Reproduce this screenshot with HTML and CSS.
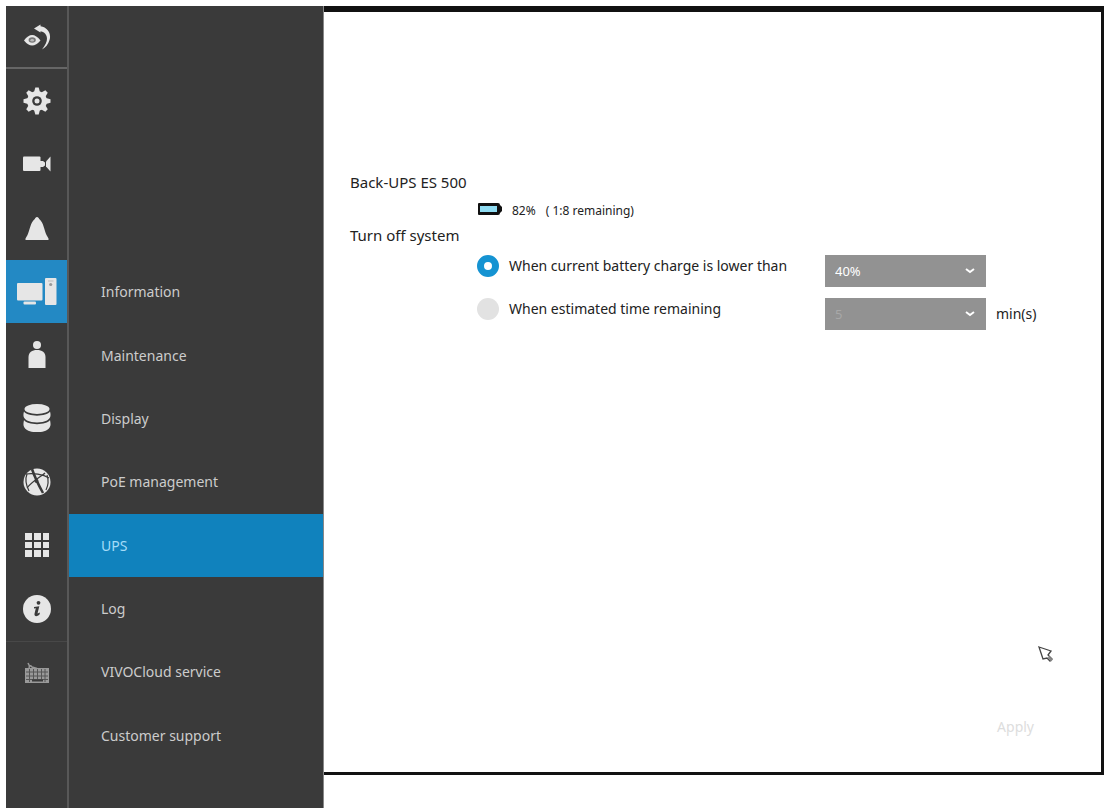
FILE: index.html
```html
<!DOCTYPE html>
<html lang="en">
<head>
  <meta charset="UTF-8">
  <meta name="viewport" content="width=device-width, initial-scale=1">
  <title>UPS settings</title>
  <link rel="stylesheet" href="styles.css">
</head>
<body>
  <div class="app">
    <nav class="rail" aria-label="Main">
      <a href="#" class="rail-back" aria-label="Back to live view">
        <svg class="icon" viewBox="0 0 28 28">
          <path d="M1 17.500Q9 6.500 17.500 17.500Q9 27.500 1 17.500Z"/>
          <ellipse cx="9.200" cy="17" rx="3.600" ry="2.800" fill="#777"/>
          <ellipse cx="9.200" cy="17.300" rx="1.800" ry="1.300" fill="#bbb"/>
          <path d="M11 5.500L17.500 1.500V3.300C25 4.500 28.500 11 26.500 17C25.300 21.500 22.500 24.500 19 26.500C24 20 24.800 16 23.300 12.500C22.200 9.800 20 8.500 17.500 8.200V9.500Z"/>
        </svg>
      </a>
      <a href="#" aria-label="Settings">
        <svg class="icon" viewBox="0 0 28 28">
          <g>
            <circle cx="14" cy="14" r="10"/>
            <path id="tooth" d="M10.800 6L12.300 .5H15.700L17.200 6Z"/>
            <use href="#tooth" transform="rotate(45 14 14)"/>
            <use href="#tooth" transform="rotate(90 14 14)"/>
            <use href="#tooth" transform="rotate(135 14 14)"/>
            <use href="#tooth" transform="rotate(180 14 14)"/>
            <use href="#tooth" transform="rotate(225 14 14)"/>
            <use href="#tooth" transform="rotate(270 14 14)"/>
            <use href="#tooth" transform="rotate(315 14 14)"/>
          </g>
          <circle cx="14" cy="14" r="4.800" class="cut"/>
          <circle cx="14" cy="14" r="2.500"/>
        </svg>
      </a>
      <a href="#" aria-label="Cameras">
        <svg class="icon" viewBox="0 0 28 28">
          <rect x="0" y="6.500" width="17.500" height="14.500" rx="1"/>
          <path d="M17 11H20L22 12.500V15.500L20 17H17Z"/>
          <path d="M27.500 6.500V21.500L23 16.500V11.500Z"/>
        </svg>
      </a>
      <a href="#" aria-label="Alarms">
        <svg class="icon" viewBox="0 0 28 28">
          <path d="M14 3C15.200 3 15.800 4 16.200 5C20.500 8 21.500 17 23.500 21L25.500 24.500V26H2.500V24.500L4.500 21C6.500 17 7.500 8 11.800 5C12.200 4 12.800 3 14 3Z"/>
        </svg>
      </a>
      <a href="#" class="active" aria-label="System">
        <svg class="icon icon-wide" viewBox="0 0 40 28">
          <rect x="0" y="6" width="25.500" height="17.500" rx="1"/>
          <rect x="6.500" y="24.500" width="12.500" height="3" rx="1"/>
          <rect x="28" y="1" width="11.500" height="27" rx="1"/>
          <path d="M31 4H36.500" stroke="#bbb" stroke-width="1"/>
          <circle cx="33.700" cy="7.500" r="1.600" fill="#999"/>
        </svg>
      </a>
      <a href="#" aria-label="Users">
        <svg class="icon" viewBox="0 0 28 28">
          <circle cx="14" cy="4" r="4"/>
          <path d="M5.500 27V16C5.500 11.500 9 9 14 9S22.500 11.500 22.500 16V27Z"/>
        </svg>
      </a>
      <a href="#" aria-label="Storage">
        <svg class="icon" viewBox="0 0 28 28">
          <ellipse cx="14" cy="5" rx="12.500" ry="5"/>
          <path d="M1 7.500C4 13 24 13 27 7.500C28 11 28 14 24 16.500C19 19 9 19 4 16.500C0 14 0 11 1 7.500Z"/>
          <path d="M1 16C4 21.500 24 21.500 27 16C28 21 28 23 24 26C19 29 9 29 4 26C0 23 0 21 1 16Z"/>
        </svg>
      </a>
      <a href="#" aria-label="Network">
        <svg class="icon" viewBox="0 0 28 28">
          <circle cx="14" cy="14" r="13.500"/>
          <g fill="none" stroke="#3a3a3a" stroke-width="1.200">
            <path d="M9 1C11 7 15 16 20 25" stroke-width="2.500"/>
            <path d="M3 6C10 5 20 6 26 10"/>
            <path d="M22 5C19 8 9 13 4 20"/>
            <path d="M24 7C26 13 25 18 23 22"/>
            <path d="M4 6C2 11 3 17 6 23"/>
          </g>
          <circle cx="13.500" cy="13" r="2" class="cut"/>
        </svg>
      </a>
      <a href="#" aria-label="Applications">
        <svg class="icon" viewBox="0 0 28 28">
          <path d="M2 2h7v7H2zM11 2h7v7H11zM20 2h6v7H20zM2 11h7v6H2zM11 11h7v6H11zM20 11h6v6H20zM2 19h7v7H2zM11 19h7v7H11zM20 19h6v7H20z"/>
        </svg>
      </a>
      <a href="#" aria-label="About">
        <svg class="icon" viewBox="0 0 28 28">
          <circle cx="14" cy="14" r="14"/>
          <circle cx="15.500" cy="7.800" r="1.900" class="cut"/>
          <path class="cut" d="M11 12L16.300 11.200L14.500 18.500L17 17.500L16.500 19.500C14 22 11 21.500 11.500 18.800L12.800 13.200L11 13.500Z"/>
        </svg>
      </a>
      <a href="#" class="rail-keyboard" aria-label="Keyboard">
        <svg class="icon" viewBox="0 0 28 28">
          <path d="M6 10C6 6 8 6 9 8L14 9.500" fill="none" stroke="#999" stroke-width="1.500"/>
          <path d="M5 4L7 8" stroke="#999" stroke-width="1.500"/>
          <rect x="2" y="9" width="24" height="15" fill="#999"/>
          <path d="M3 13H25M3 17H25M3 20.500H25M6.500 10V23M10.500 10V20M14.500 10V20M18.500 10V20M22 10V23" stroke="#555" stroke-width="1"/>
          <rect x="9" y="20.500" width="11" height="2" class="cut"/>
        </svg>
      </a>
    </nav>

    <nav class="submenu" aria-label="System">
      <a href="#">Information</a>
      <a href="#">Maintenance</a>
      <a href="#">Display</a>
      <a href="#">PoE management</a>
      <a href="#" class="active">UPS</a>
      <a href="#">Log</a>
      <a href="#">VIVOCloud service</a>
      <a href="#">Customer support</a>
    </nav>

    <main class="panel">
      <form class="ups">
        <h1>Back-UPS ES 500</h1>
        <div class="battery">
          <svg class="battery-icon" viewBox="0 0 24 12">
            <path d="M1 0H20Q22 0 22 2L24 4V8L22 10Q22 12 20 12H1Q0 12 0 11V1Q0 0 1 0Z" fill="#111"/>
            <rect x="2" y="3" width="17" height="6" fill="#8fdcf2"/>
          </svg>
          <span>82%</span>
          <span>( 1:8 remaining)</span>
        </div>
        <h2>Turn off system</h2>
        <div class="options">
          <input type="radio" name="mode" id="by-charge" checked>
          <label for="by-charge">When current battery charge is lower than</label>
          <div class="field">
            <div class="select">
              <select aria-label="Battery charge"><option>40%</option><option>30%</option><option>20%</option></select>
              <svg viewBox="0 0 12 8"><path d="M2 2L6 5L10 2"/></svg>
            </div>
          </div>
          <input type="radio" name="mode" id="by-time">
          <label for="by-time">When estimated time remaining</label>
          <div class="field">
            <div class="select">
              <select id="minutes" disabled><option>5</option><option>10</option></select>
              <svg viewBox="0 0 12 8"><path d="M2 2L6 5L10 2"/></svg>
            </div>
            <label for="minutes">min(s)</label>
          </div>
        </div>
        <button type="submit" class="apply" disabled>Apply</button>
      </form>
      <svg class="pointer" viewBox="0 0 18 18">
        <path d="M2 1L14 5L11 9L15 13L13 15L10 12L6 13Z" fill="#fff" stroke="#444" stroke-width="1.300"/>
        <path d="M11.500 11L15 14.500" stroke="#888" stroke-width="2.500"/>
      </svg>
    </main>
  </div>
</body>
</html>
```

FILE: styles.css
```css
:root {
  --dark: #3a3a3a;
  --line: #666;
  --blue: #1082bd;
  --text: #222;
  --icon: #e6e6e6;
}
* { box-sizing: border-box; margin: 0; padding: 0; }
body {
  font-family: 'Noto Sans', 'Open Sans', sans-serif;
  font-size: 14px;
  color: var(--text);
  background: #fff;
}
a { text-decoration: none; }
.app {
  display: flex;
  min-height: 100vh;
  padding: 6px 6px 4px;
}

/* icon rail */
.rail {
  display: grid;
  grid-template-rows: 63px repeat(10, minmax(48px, 1fr));
  flex: 0 0 63px;
  padding-bottom: 104px;
  background: var(--dark);
  border-right: 2px solid #585858;
}
.rail a {
  display: flex;
  align-items: center;
  justify-content: center;
}
.rail .rail-back { border-bottom: 2px solid var(--line); }
.rail .rail-keyboard { border-top: 1px solid #484848; }
.rail .active { background: #2389c4; }
.icon {
  width: 28px;
  height: 28px;
  fill: var(--icon);
}
.icon-wide { width: 40px; }
.cut { fill: var(--dark); }

/* second level menu */
.submenu {
  display: grid;
  grid-auto-rows: minmax(48px, 1fr);
  flex: 0 0 255px;
  padding: 254px 0 41px;
  background: var(--dark);
  border-right: 1px solid #888;
}
.submenu a {
  display: flex;
  align-items: center;
  padding-left: 32px;
  color: #ccc;
}
.submenu .active {
  background: var(--blue);
  color: #a5dcf8;
}

/* content */
.panel {
  position: relative;
  flex: 1;
  display: flex;
  margin-bottom: 33px;
  border: solid #111;
  border-width: 6px 3px 3px 0;
}
.ups {
  flex: 1;
  display: flex;
  flex-direction: column;
  padding: 160px 59px 32px 26px;
}
h1, h2 {
  font-size: 15px;
  font-weight: 400;
  line-height: 20px;
}
.battery {
  display: flex;
  align-items: center;
  gap: 10px;
  height: 33px;
  padding-left: 128px;
  font-size: 12px;
}
.battery span { padding-top: 4px; }
.battery-icon {
  width: 24px;
  height: 12px;
}
.options {
  display: grid;
  grid-template-columns: 22px 306px 1fr;
  align-items: start;
  gap: 11px 10px;
  padding: 10px 0 0 127px;
}
.options label { line-height: 22px; }
input[type="radio"] {
  appearance: none;
  width: 22px;
  height: 22px;
  border-radius: 50%;
  background: #e2e2e2;
}
input[type="radio"]:checked {
  background: #fff;
  border: 7px solid #1593d2;
}
.field {
  display: flex;
  align-items: center;
  gap: 10px;
}
.select {
  display: grid;
  align-items: center;
  flex: 0 0 161px;
}
.select select,
.select svg { grid-area: 1 / 1; }
.select select {
  appearance: none;
  width: 100%;
  height: 32px;
  padding: 0 10px;
  border: none;
  background: #929292;
  color: #fff;
  font: inherit;
  font-size: 13px;
}
.select select:disabled {
  color: #a8a8a8;
  opacity: 1;
}
.select svg {
  justify-self: end;
  width: 12px;
  height: 8px;
  margin-right: 10px;
  fill: none;
  stroke: #fff;
  stroke-width: 2;
  pointer-events: none;
}
.apply {
  align-self: flex-end;
  margin-top: auto;
  padding: 4px 8px;
  border: none;
  background: none;
  color: #ddd;
  font: inherit;
}
.pointer {
  position: absolute;
  right: 46px;
  bottom: 108px;
  width: 18px;
  height: 18px;
}
```
